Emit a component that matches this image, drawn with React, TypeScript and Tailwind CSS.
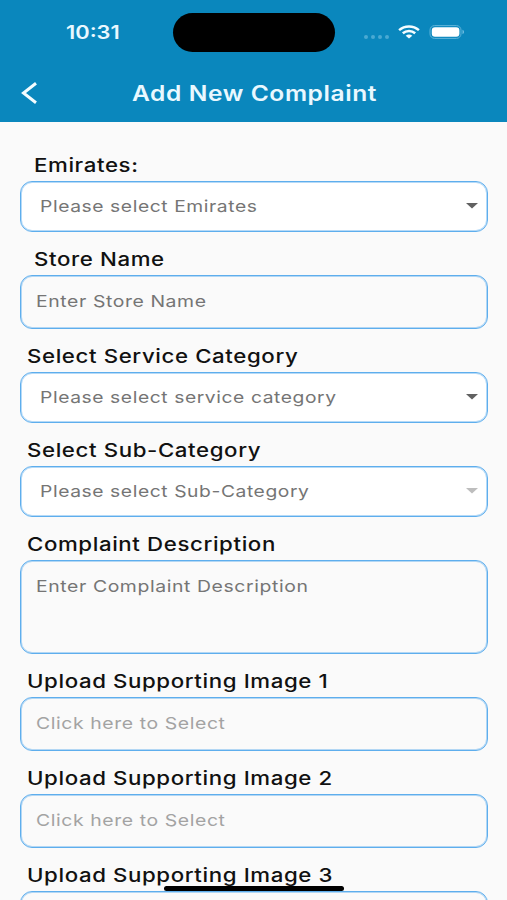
import React from "react";

type FieldProps = {
  label: string;
  placeholder?: string;
  kind?: "select" | "input" | "textarea" | "file";
  indent?: boolean;
  disabled?: boolean;
};

function Field({ label, placeholder, kind = "input", indent = false, disabled = false }: FieldProps) {
  const select = kind === "select";
  const height = select ? "h-[51px]" : kind === "textarea" ? "h-[94px]" : "h-[54px]";
  return (
    <div>
      <div className={`flex h-[43px] items-end pb-1 ${indent ? "pl-[13.5px]" : "pl-[7px]"}`}>
        <span className="origin-left scale-x-[1.203] whitespace-nowrap text-[18.5px] font-medium leading-6 tracking-[0.5px] text-[#111]">
          {label}
        </span>
      </div>
      <div
        className={`flex justify-between rounded-[12px] border border-[#5eaeed] pr-[9px] shadow-[inset_0_0_0_1px_rgba(94,174,237,0.45)] ${height} ${
          select ? "bg-white pl-[19px]" : "pl-[15px]"
        } ${kind === "textarea" ? "items-start pt-[13px]" : "items-center pb-[2px]"}`}
      >
        {placeholder && (
          <span
            className={`origin-left whitespace-nowrap text-[16.5px] leading-6 tracking-[0.5px] ${
              select ? "scale-x-[1.167]" : "scale-x-[1.176]"
            } ${kind === "file" ? "text-[#a3a3a3]" : "text-[#757575]"}`}
          >
            {placeholder}
          </span>
        )}
        {select && (
          <svg width="12" height="6" viewBox="0 0 12 6" className={disabled ? "text-[#bdbdbd]" : "text-[#616161]"}>
            <path d="M0 0h12L6 5.6z" fill="currentColor" />
          </svg>
        )}
      </div>
    </div>
  );
}

function StatusBar() {
  return (
    <div className="flex h-[64px] items-center">
      <div className="w-[173px] pl-[66px] pt-px">
        <span className="inline-block origin-left scale-x-[1.18] text-[18.5px] font-semibold text-[#e9f8ff]">10:31</span>
      </div>
      <div className="h-[39px] w-[162px] rounded-full bg-black" />
      <div className="ml-[29px] mt-[9px] flex gap-[3px]">
        {[0, 1, 2, 3].map((i) => (
          <i key={i} className="size-1 rounded-full bg-[#4aa9d3]" />
        ))}
      </div>
      <svg width="22" height="14" viewBox="0 0 22 14" className="ml-[9px]" fill="none" stroke="#f4fcff" strokeWidth="2.5">
        <path d="M1.1 5.1C6.7.2 15.3.2 20.9 5.1" />
        <path d="M4.8 8.3c3.5-3 8.9-3 12.4 0" />
        <path d="M11 13.4 7.7 10.7c1.9-1.5 4.7-1.5 6.6 0z" fill="#f4fcff" stroke="none" />
      </svg>
      <svg width="36" height="14" viewBox="0 0 36 14" className="ml-[9px]">
        <rect x="1" y=".6" width="31" height="12.8" rx="4.5" fill="none" stroke="#5fb4da" />
        <rect x="2.8" y="2.2" width="27.6" height="9.6" rx="3.2" fill="#fff" />
        <path d="M33.5 4.8c2 .7 2 3.7 0 4.4z" fill="#6fbcdf" />
      </svg>
    </div>
  );
}

export default function App() {
  return (
    <div className="relative h-[900px] w-[507px] overflow-hidden bg-[#fafafa] font-['Inter','Liberation_Sans',sans-serif]">
      <header className="h-[122px] bg-[#0a87bd]">
        <StatusBar />
        <div className="flex h-[58px] items-center pl-[21px]">
          <svg width="17" height="22" viewBox="0 0 17 22" fill="none" stroke="#f4fcff" strokeWidth="3">
            <path d="M15 1.3 2.5 11 15 20.7" />
          </svg>
          <h1 className="ml-[93.5px] mt-px origin-left scale-x-[1.17] whitespace-nowrap text-[21px] font-semibold tracking-[0.5px] text-[#e9f8ff]">
            Add New Complaint
          </h1>
        </div>
      </header>
      <main className="pl-5 pr-[19px] pt-4">
        <Field label="Emirates:" placeholder="Please select Emirates" kind="select" indent />
        <Field label="Store Name" placeholder="Enter Store Name" indent />
        <Field label="Select Service Category" placeholder="Please select service category" kind="select" />
        <Field label="Select Sub-Category" placeholder="Please select Sub-Category" kind="select" disabled />
        <Field label="Complaint Description" placeholder="Enter Complaint Description" kind="textarea" />
        <Field label="Upload Supporting Image 1" placeholder="Click here to Select" kind="file" />
        <Field label="Upload Supporting Image 2" placeholder="Click here to Select" kind="file" />
        <Field label="Upload Supporting Image 3" kind="file" />
      </main>
      <div className="absolute left-[164px] top-[886px] h-[5px] w-[180px] rounded-full bg-black" />
    </div>
  );
}
